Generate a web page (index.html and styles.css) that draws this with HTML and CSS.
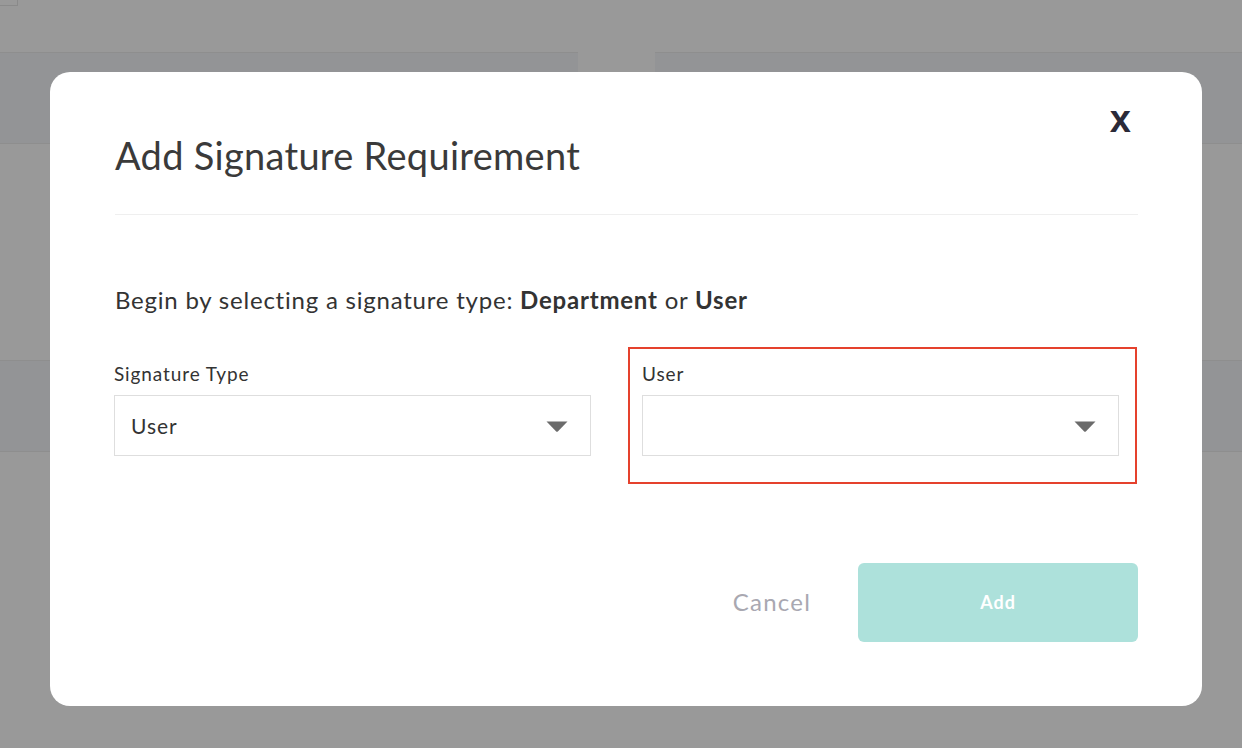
FILE: index.html
```html
<!DOCTYPE html>
<html>
<head>
<meta charset="utf-8">
<link rel="stylesheet" href="styles.css">
</head>
<body>
<div class="page">
  <div class="bg-top"><div class="bg-chip"></div></div>
  <div class="bg-bands">
    <div class="bg-panel bg-panel-left"></div>
    <div class="bg-panel bg-panel-right"></div>
  </div>
  <div class="bg-space"></div>
  <div class="bg-band"></div>
</div>

<div class="overlay">
  <div class="modal">
    <button class="close" type="button">x</button>
    <h1 class="title">Add Signature Requirement</h1>
    <hr class="sep">
    <p class="intro">Begin by selecting a signature type: <b>Department</b> or <b>User</b></p>
    <div class="fields">
      <div class="field">
        <div class="label">Signature Type</div>
        <div class="select">
          <span class="value">User</span>
          <svg class="caret" width="22" height="11" viewBox="0 0 22 11"><path d="M0.5 0.5 H21.5 L11.8 10.4 Q11 11 10.2 10.4 Z" fill="#6b6b6b"/></svg>
        </div>
      </div>
      <div class="field field-highlight">
        <div class="label">User</div>
        <div class="select">
          <span class="value"></span>
          <svg class="caret" width="22" height="11" viewBox="0 0 22 11"><path d="M0.5 0.5 H21.5 L11.8 10.4 Q11 11 10.2 10.4 Z" fill="#6b6b6b"/></svg>
        </div>
      </div>
    </div>
    <div class="actions">
      <button class="cancel" type="button">Cancel</button>
      <button class="add" type="button">Add</button>
    </div>
  </div>
</div>
</body>
</html>
```

FILE: styles.css
```css
* { box-sizing: border-box; }
html, body { margin: 0; padding: 0; }
body {
  width: 1242px;
  height: 748px;
  overflow: hidden;
  background: #999999;
  font-family: Lato, "Open Sans", sans-serif;
  position: relative;
}

/* background page (dimmed) */
.page { width: 100%; }
.bg-top { height: 52px; }
.bg-chip {
  width: 18px;
  height: 6px;
  border-right: 1px solid #8a8a8a;
  border-bottom: 1px solid #8a8a8a;
}
.bg-bands {
  display: flex;
  gap: 77px;
  height: 92px;
}
.bg-panel {
  background: #939496;
  border-top: 1px solid #8e8e8e;
  border-bottom: 1px solid #8e8e8e;
}
.bg-panel-left { width: 578px; }
.bg-panel-right { flex: 1; }
.bg-space { height: 216px; }
.bg-band {
  height: 92px;
  background: #939496;
  border-top: 1px solid #8e8e8e;
  border-bottom: 1px solid #8e8e8e;
}

/* modal */
.overlay {
  position: absolute;
  inset: 0;
}
.modal {
  position: absolute;
  left: 50px;
  top: 72px;
  width: 1152px;
  height: 634px;
  background: #ffffff;
  border-radius: 20px;
  padding: 61px 64px 64px 65px;
  display: flex;
  flex-direction: column;
}
.close {
  position: absolute;
  top: 28px;
  right: 71px;
  border: 0;
  background: none;
  padding: 0;
  font-family: "Liberation Sans", Arial, sans-serif;
  font-weight: 700;
  font-size: 38px;
  line-height: 38px;
  color: #2b2a38;
  cursor: pointer;
}
.title {
  margin: 0;
  font-weight: 400;
  font-size: 38px;
  line-height: 44px;
  letter-spacing: 0.3px;
  color: #3a3a3a;
}
.sep {
  margin: 37px 0 0 0;
  border: 0;
  border-top: 1px solid #efefef;
  height: 0;
}
.intro {
  margin: 71px 0 0 0;
  font-size: 24px;
  line-height: 28px;
  letter-spacing: 0.78px;
  color: #333333;
}
.intro b { font-weight: 700; color: #333; }

.fields {
  display: grid;
  grid-template-columns: 514px 509px;
  margin: 33px 0 0 -1px;
}
.field {
  padding: 16px 0 28px 0;
}
.field-highlight {
  border: 2px solid #e5412d;
  padding: 14px 16px 26px 12px;
}
.label {
  font-size: 19px;
  line-height: 22px;
  letter-spacing: 0.9px;
  color: #333333;
  margin-bottom: 10px;
}
.select {
  width: 477px;
  height: 61px;
  border: 1px solid #dedede;
  display: flex;
  align-items: center;
  justify-content: space-between;
  padding: 0 22px 0 16px;
}
.value {
  font-size: 21px;
  letter-spacing: 1px;
  color: #333333;
}
.caret { display: block; margin-top: 1px; }

.actions {
  margin-top: 79px;
  display: flex;
  justify-content: flex-end;
  align-items: center;
  gap: 47px;
}
.cancel {
  border: 0;
  background: none;
  padding: 0;
  font-family: Lato, "Open Sans", sans-serif;
  font-size: 24px;
  letter-spacing: 1.2px;
  color: #a9a8b1;
  margin-top: -2px;
}
.add {
  width: 280px;
  height: 79px;
  border: 0;
  border-radius: 6px;
  background: #ade1db;
  color: #ffffff;
  font-family: Lato, "Open Sans", sans-serif;
  font-weight: 700;
  font-size: 18px;
  letter-spacing: 1px;
  padding-bottom: 2px;
}
```
